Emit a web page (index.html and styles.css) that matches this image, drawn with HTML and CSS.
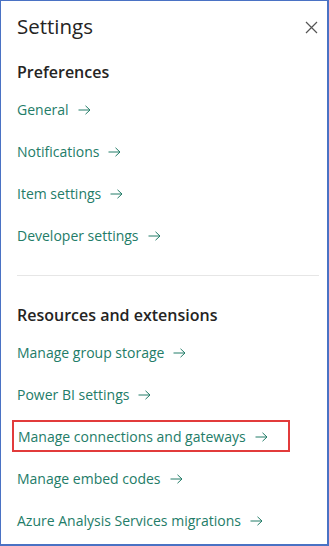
FILE: index.html
```html
<!DOCTYPE html>
<html lang="en">
<head>
  <meta charset="UTF-8">
  <title>Settings</title>
  <link rel="stylesheet" href="styles.css">
</head>
<body>
  <div class="panel">
    <header class="panel-head">
      <h1>Settings</h1>
      <button class="close" aria-label="Close">
        <svg width="13" height="13" viewBox="0 0 13 13"><path d="M1 1L12 12M12 1L1 12" stroke="#555" stroke-width="1.2" fill="none"/></svg>
      </button>
    </header>

    <section class="group">
      <h2>Preferences</h2>
      <a class="link" href="#">General <span class="arrow"><svg width="13" height="10" viewBox="0 0 13 10"><path d="M0.5 5H12M7.5 0.8L12 5L7.5 9.2" stroke="currentColor" stroke-width="1" fill="none"/></svg></span></a>
      <a class="link" href="#">Notifications <span class="arrow"><svg width="13" height="10" viewBox="0 0 13 10"><path d="M0.5 5H12M7.5 0.8L12 5L7.5 9.2" stroke="currentColor" stroke-width="1" fill="none"/></svg></span></a>
      <a class="link" href="#">Item settings <span class="arrow"><svg width="13" height="10" viewBox="0 0 13 10"><path d="M0.5 5H12M7.5 0.8L12 5L7.5 9.2" stroke="currentColor" stroke-width="1" fill="none"/></svg></span></a>
      <a class="link" href="#">Developer settings <span class="arrow"><svg width="13" height="10" viewBox="0 0 13 10"><path d="M0.5 5H12M7.5 0.8L12 5L7.5 9.2" stroke="currentColor" stroke-width="1" fill="none"/></svg></span></a>
    </section>

    <hr class="divider">

    <section class="group">
      <h2>Resources and extensions</h2>
      <a class="link" href="#">Manage group storage <span class="arrow"><svg width="13" height="10" viewBox="0 0 13 10"><path d="M0.5 5H12M7.5 0.8L12 5L7.5 9.2" stroke="currentColor" stroke-width="1" fill="none"/></svg></span></a>
      <a class="link" href="#">Power BI settings <span class="arrow"><svg width="13" height="10" viewBox="0 0 13 10"><path d="M0.5 5H12M7.5 0.8L12 5L7.5 9.2" stroke="currentColor" stroke-width="1" fill="none"/></svg></span></a>
      <a class="link highlight" href="#">Manage connections and gateways <span class="arrow"><svg width="13" height="10" viewBox="0 0 13 10"><path d="M0.5 5H12M7.5 0.8L12 5L7.5 9.2" stroke="currentColor" stroke-width="1" fill="none"/></svg></span></a>
      <a class="link" href="#">Manage embed codes <span class="arrow"><svg width="13" height="10" viewBox="0 0 13 10"><path d="M0.5 5H12M7.5 0.8L12 5L7.5 9.2" stroke="currentColor" stroke-width="1" fill="none"/></svg></span></a>
      <a class="link" href="#">Azure Analysis Services migrations <span class="arrow"><svg width="13" height="10" viewBox="0 0 13 10"><path d="M0.5 5H12M7.5 0.8L12 5L7.5 9.2" stroke="currentColor" stroke-width="1" fill="none"/></svg></span></a>
    </section>
  </div>
</body>
</html>
```

FILE: styles.css
```css
html, body {
  margin: 0;
  padding: 0;
  height: 100%;
}
body {
  font-family: "Open Sans", "Noto Sans", Arial, sans-serif;
  background: #fff;
}
.panel {
  box-sizing: border-box;
  width: 329px;
  height: 546px;
  border-top: 1px solid #4a72c4;
  border-left: 1px solid #4a72c4;
  border-right: 2px solid #4a72c4;
  border-bottom: 2px solid #4a72c4;
  padding: 0 8px 0 16px;
  overflow: hidden;
}
.panel-head {
  display: flex;
  justify-content: space-between;
  align-items: center;
  height: 50px;
}
.panel-head h1 {
  margin: 0;
  font-size: 20.5px;
  font-weight: 400;
  color: #252423;
}
.close {
  border: none;
  background: none;
  padding: 0;
  width: 16px;
  height: 16px;
  display: flex;
  align-items: center;
  justify-content: center;
  margin-top: 2px;
}
.group {
  display: flex;
  flex-direction: column;
  align-items: flex-start;
}
.group h2 {
  margin: 5px 0 0 0;
  height: 32px;
  line-height: 32px;
  font-size: 16px;
  font-weight: 600;
  color: #252423;
}
.link {
  display: flex;
  align-items: center;
  height: 42px;
  font-size: 14px;
  color: #237c68;
  text-decoration: none;
  white-space: nowrap;
}
.arrow {
  display: flex;
  margin-left: 9px;
  margin-top: 1px;
}
.highlight {
  margin-left: -5px;
  padding: 0 20px 0 4px;
  height: 28px;
  margin-top: 5px;
  margin-bottom: 5px;
  border: 2px solid #e23b3b;
}
.divider {
  border: none;
  border-top: 1px solid #e6e6e6;
  margin: 19px 0 18px 0;
}
```
